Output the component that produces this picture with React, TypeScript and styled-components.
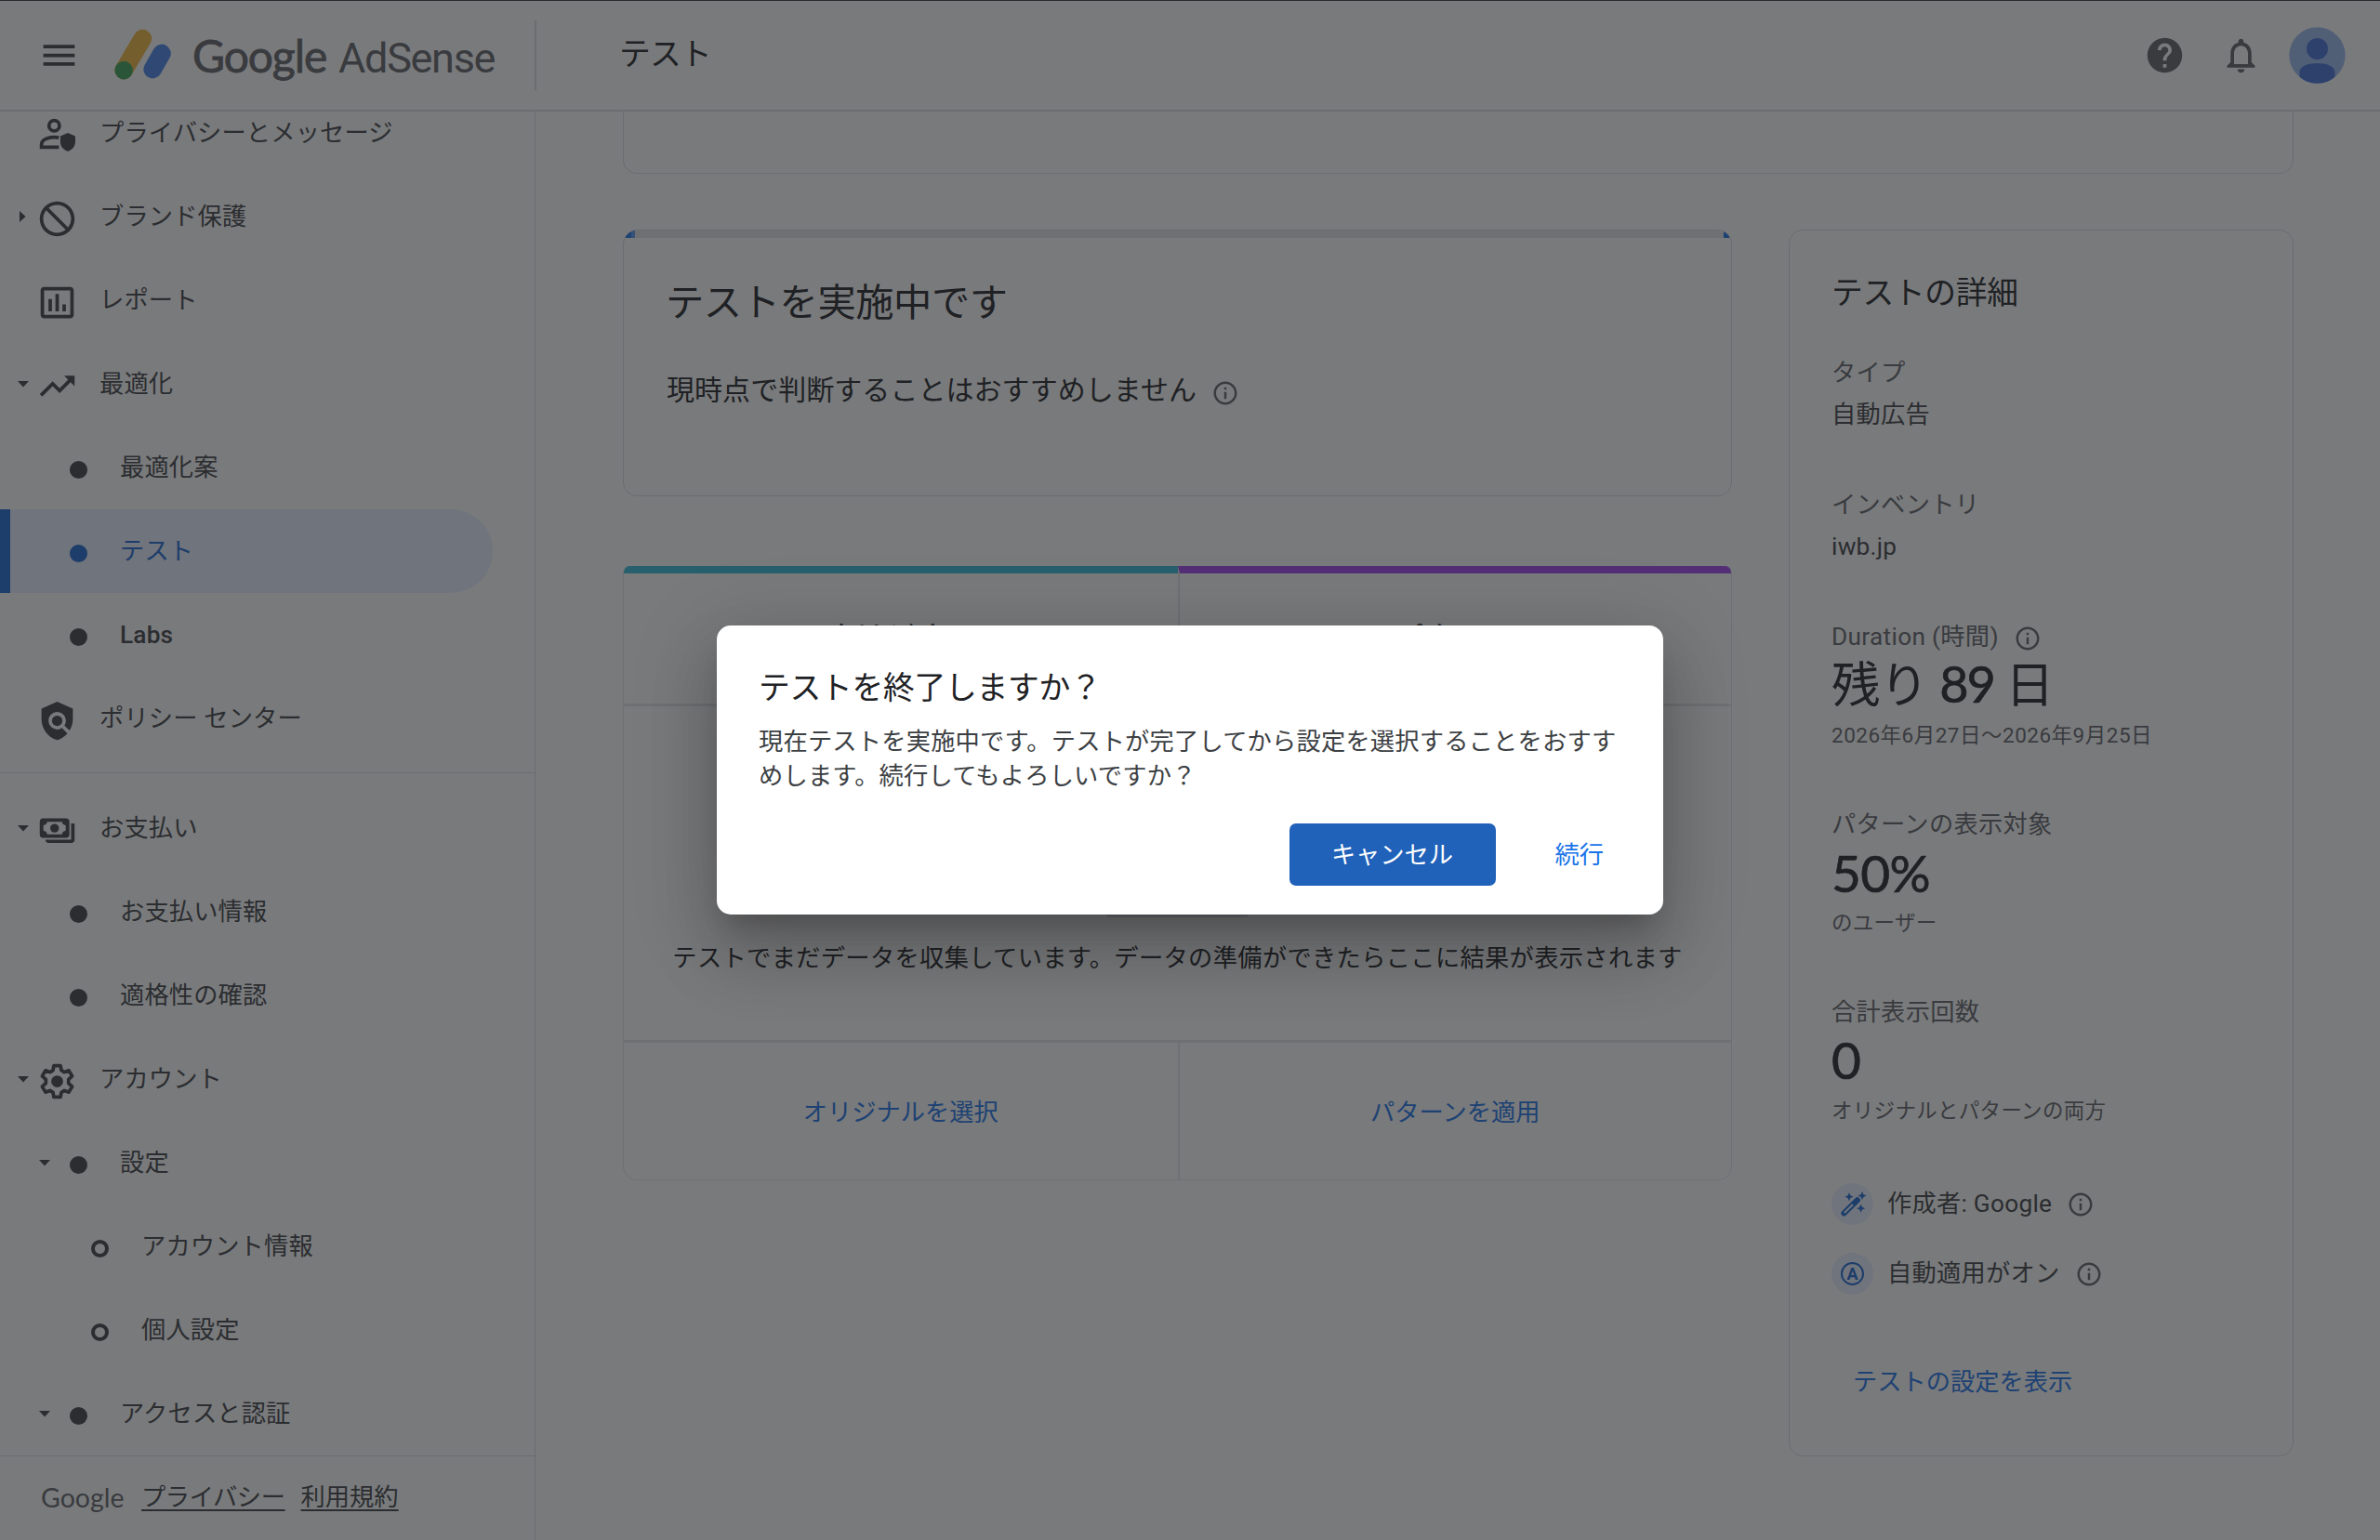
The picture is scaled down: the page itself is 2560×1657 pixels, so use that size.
import React from 'react';
import styled, { createGlobalStyle, css } from 'styled-components';
import {
  MdBlock,
  MdHelp,
  MdInsertChartOutlined,
  MdMenu,
  MdOutlineInfo,
  MdOutlineNotifications,
  MdPolicy,
  MdTrendingUp,
} from 'react-icons/md';

const c = {
  ink: '#202124',
  text: '#3c4043',
  muted: '#5f6368',
  line: '#dadce0',
  track: '#e4e6e9',
  link: '#1a73e8',
  active: '#1967d2',
  tint: '#e8f0fe',
  teal: '#33bdd8',
  purple: '#a044ef',
};

const sans = `Roboto, "Noto Sans CJK JP", sans-serif`;
const brand = `Lato, "Noto Sans CJK JP", sans-serif`;

const GlobalStyle = createGlobalStyle`
  *, *::before, *::after { box-sizing: border-box; }
  html, body { margin: 0; padding: 0; background: #fff; }
  body { overflow: hidden; font-family: ${sans}; color: ${c.text}; }
  p, h1, h2, h3, ul { margin: 0; padding: 0; font-weight: 400; }
  button { font: inherit; border: 0; background: none; padding: 0; }
  svg { display: block; flex: none; }
`;

const Page = styled.div`
  position: relative;
  display: flex;
  flex-direction: column;
  width: 2560px;
  height: 1657px;
  overflow: hidden;
  background: #fff;
`;

/* ---------- header ---------- */

const Header = styled.header`
  display: flex;
  align-items: center;
  flex: none;
  height: 120px;
  border-top: 1px solid #37383b;
  border-bottom: 2px solid ${c.line};
`;

const BrandArea = styled.div`
  display: flex;
  align-items: center;
  width: 577px;
  height: 75px;
  padding-left: 41px;
  border-right: 2px solid ${c.line};
`;

const LogoMark = styled.svg`
  margin-left: 37px;
`;

const Wordmark = styled.div`
  display: flex;
  align-items: baseline;
  margin-left: 22px;
  padding-top: 4px;
  font-family: ${brand};
  line-height: 60px;
  color: ${c.muted};
`;

const WordGoogle = styled.span`
  width: 157px;
  font-size: 48px;
  letter-spacing: -1.1px;
  -webkit-text-stroke: 0.8px ${c.muted};
`;

const WordProduct = styled.span`
  font-family: ${sans};
  font-size: 45px;
  letter-spacing: -1.3px;
`;

const PageTitle = styled.h1`
  flex: 1;
  padding: 0 0 2px 89px;
  font-size: 33.75px;
  line-height: 48px;
  letter-spacing: -0.8px;
  color: ${c.ink};
`;

const HeaderActions = styled.div`
  display: flex;
  align-items: center;
  gap: 37px;
  padding-right: 37px;
  color: ${c.muted};
`;

const IconButton = styled.button`
  color: inherit;
`;

const AvatarButton = styled(IconButton)`
  margin-left: -8px;
`;

/* ---------- sidebar ---------- */

const Body = styled.div`
  display: flex;
  flex: 1;
  min-height: 0;
`;

const Sidebar = styled.nav`
  display: flex;
  flex-direction: column;
  flex: none;
  width: 576px;
  border-right: 1px solid ${c.line};
`;

const NavScroll = styled.div`
  flex: 1;
  min-height: 0;
  overflow: hidden;
`;

const NavList = styled.ul`
  margin-top: -22px;
  list-style: none;
`;

const NavRow = styled.li<{ $level: number; $active?: boolean }>`
  display: flex;
  align-items: center;
  width: 530px;
  height: 90px;
  padding-left: ${(p) => 17 + p.$level * 23}px;
  font-size: 26.25px;
  line-height: 40px;
  letter-spacing: 0.15px;
  white-space: nowrap;
  ${(p) =>
    p.$active &&
    css`
      padding-left: ${6 + p.$level * 23}px;
      border-left: 11px solid ${c.active};
      border-radius: 0 45px 45px 0;
      background: ${c.tint};
      color: ${c.active};
    `}
`;

const CaretSlot = styled.span`
  display: flex;
  justify-content: center;
  width: 15px;
`;

const NavIcon = styled.span`
  display: flex;
  justify-content: center;
  width: 45px;
  margin: 5px 22px 0 7px;
`;

const BlockIcon = styled(MdBlock)`
  transform: scaleX(-1);
`;

const Dot = styled.span<{ $ring?: boolean }>`
  width: 19px;
  height: 19px;
  border-radius: 50%;
  border: 4px solid currentColor;
  background: ${(p) => (p.$ring ? 'transparent' : 'currentColor')};
`;

const NavLabel = styled.span<{ $latin?: boolean; $top?: boolean }>`
  padding: 0 0 1px ${(p) => (p.$top ? 1 : 0)}px;
  font-weight: ${(p) => (p.$latin ? 500 : 400)};
`;

const NavDivider = styled.li`
  height: 1px;
  margin: 13px 0 14px;
  background: ${c.line};
`;

const SidebarFooter = styled.footer`
  display: flex;
  align-items: center;
  flex: none;
  height: 91px;
  padding: 0 0 2px 44px;
  border-top: 1px solid ${c.line};
  font-size: 26.25px;
  line-height: 40px;
`;

const FooterLogo = styled.span`
  width: 108px;
  font-family: ${brand};
  font-size: 28.5px;
  color: ${c.muted};
`;

const FooterLink = styled.a<{ $tight?: boolean }>`
  margin-right: 17px;
  letter-spacing: ${(p) => (p.$tight ? -0.4 : 0)}px;
  text-decoration: underline;
  text-decoration-thickness: 2px;
  text-underline-offset: 4px;
`;

/* ---------- content ---------- */

const Main = styled.main`
  flex: 1;
  padding: 0 93px 0 94px;
`;

const TopCard = styled.div`
  height: 67px;
  border: 1px solid ${c.line};
  border-top: 0;
  border-radius: 0 0 15px 15px;
`;

const Columns = styled.div`
  display: flex;
  align-items: flex-start;
  gap: 61px;
  margin-top: 60px;
`;

const LeftColumn = styled.div`
  display: flex;
  flex-direction: column;
  gap: 75px;
  width: 1193px;
`;

const StatusCard = styled.section`
  height: 287px;
  overflow: hidden;
  border: 1px solid ${c.line};
  border-radius: 15px;
`;

const Progress = styled.div`
  display: flex;
  justify-content: space-between;
  height: 8px;
  background: ${c.track};
`;

const ProgressEnd = styled.span<{ $w: number; $soft: number }>`
  width: ${(p) => p.$w}px;
  border-right: ${(p) => p.$soft}px solid #5b9cf5;
  background: ${c.link};
`;

const StatusTitle = styled.h2`
  padding: 43px 45px 0;
  font-size: 41.25px;
  line-height: 54px;
  letter-spacing: -0.4px;
  color: ${c.ink};
`;

const StatusLine = styled.p`
  display: flex;
  align-items: center;
  gap: 16px;
  padding: 47px 45px 0 46px;
  font-size: 30px;
  line-height: 40px;
  letter-spacing: 0.05px;
  color: ${c.ink};
`;

const InfoGlyph = styled(MdOutlineInfo)<{ $drop?: number }>`
  margin-top: ${(p) => p.$drop ?? 0}px;
  color: ${c.muted};
`;

const CompareCard = styled.section`
  display: flex;
  flex-direction: column;
  height: 661px;
  overflow: hidden;
  border: 1px solid ${c.track};
  border-top: 0;
  border-radius: 7px 7px 15px 15px;
`;

const SplitRow = styled.div<{ $h: number; $line?: boolean }>`
  display: grid;
  grid-template-columns: 1fr 1fr;
  height: ${(p) => p.$h}px;
  ${(p) => p.$line && `border-bottom: 3px solid ${c.track};`}
`;

const Variant = styled.div<{ $color: string }>`
  padding-top: 49px;
  border-top: 8px solid ${(p) => p.$color};
  font-size: 33.75px;
  line-height: 42px;
  text-align: center;
  color: ${c.ink};
  & + & {
    padding-top: 50px;
    border-left: 2px solid ${c.track};
  }
`;

const Pending = styled.div`
  display: flex;
  flex-direction: column;
  align-items: center;
  height: 362px;
  padding-top: 50px;
  border-bottom: 3px solid ${c.track};
  font-size: 26.25px;
  line-height: 40px;
  letter-spacing: 0.33px;
  color: ${c.ink};
`;

const Placeholder = styled.div`
  width: 153px;
  height: 177px;
  margin-bottom: 24px;
  border-radius: 4px;
  background: #d8dde3;
`;

const Choice = styled.div`
  display: flex;
  align-items: center;
  justify-content: center;
  padding-top: 3px;
  font-size: 26.25px;
  line-height: 40px;
  color: ${c.link};
  & + & {
    border-left: 2px solid ${c.track};
  }
`;

/* ---------- details ---------- */

const Details = styled.aside`
  width: 543px;
  height: 1320px;
  padding: 45px 45px 0;
  border: 1px solid ${c.line};
  border-radius: 15px;
`;

const DetailsTitle = styled.h2`
  margin-bottom: 42px;
  font-size: 33.75px;
  line-height: 46px;
  letter-spacing: -0.3px;
  color: ${c.ink};
`;

const Field = styled.div<{ $gap: number }>`
  margin-bottom: ${(p) => p.$gap}px;
`;

const Label = styled.div`
  display: flex;
  align-items: center;
  gap: 16px;
  font-size: 26.25px;
  line-height: 40px;
  letter-spacing: 0.3px;
  color: ${c.muted};
`;

const Value = styled.div`
  font-size: 26.25px;
  line-height: 50px;
  letter-spacing: 0.25px;
  color: ${c.text};
`;

const BigValue = styled.div<{ $lift: number }>`
  height: 64px;
  padding-top: ${(p) => 4 - p.$lift}px;
  font-family: ${brand};
  font-size: 52.5px;
  line-height: 56px;
  letter-spacing: -0.4px;
  word-spacing: -1px;
  color: ${c.ink};
`;

const Figure = styled.span<{ $tight?: boolean }>`
  font-size: ${(p) => (p.$tight ? 54 : 55)}px;
  letter-spacing: ${(p) => (p.$tight ? -2 : -0.7)}px;
  -webkit-text-stroke: 0.7px ${c.ink};
`;

const Note = styled.div<{ $wide?: boolean }>`
  font-size: 22.5px;
  line-height: 44px;
  letter-spacing: ${(p) => (p.$wide ? 0.5 : 0.3)}px;
  color: ${c.muted};
`;

const ChipRow = styled.div`
  display: flex;
  align-items: center;
  height: 45px;
  margin-bottom: 30px;
  font-size: 26.25px;
  line-height: 40px;
  letter-spacing: 0.25px;
  color: ${c.text};
`;

const Chip = styled.span`
  display: flex;
  align-items: center;
  justify-content: center;
  width: 45px;
  height: 45px;
  margin-right: 15px;
  border-radius: 50%;
  background: ${c.tint};
  color: ${c.active};
`;

const ChipLabel = styled.span`
  margin: 0 16px 1px 0;
`;

const LetterRing = styled.span`
  width: 25px;
  height: 25px;
  border: 2.5px solid currentColor;
  border-radius: 50%;
  font-size: 18px;
  font-weight: 700;
  letter-spacing: 0;
  line-height: 21px;
  text-align: center;
`;

const SettingsLink = styled.a`
  display: block;
  margin-top: 74px;
  padding-left: 23px;
  font-size: 26.25px;
  line-height: 40px;
  color: ${c.link};
`;

/* ---------- dialog ---------- */

const Scrim = styled.div`
  position: absolute;
  inset: 0;
  display: flex;
  align-items: center;
  justify-content: center;
  background: rgba(32, 33, 36, 0.6);
`;

const Dialog = styled.div`
  display: flex;
  flex-direction: column;
  width: 1018px;
  height: 311px;
  padding: 44px 45px 31px;
  border-radius: 15px;
  background: #fff;
  box-shadow:
    0 21px 28px -13px rgba(0, 0, 0, 0.2),
    0 45px 71px 6px rgba(0, 0, 0, 0.14),
    0 17px 86px 15px rgba(0, 0, 0, 0.12);
`;

const DialogTitle = styled.h3`
  font-size: 33.75px;
  line-height: 48px;
  letter-spacing: -0.25px;
  color: ${c.ink};
`;

const DialogText = styled.p`
  margin-top: 15px;
  font-size: 26.25px;
  line-height: 37px;
  letter-spacing: 0.2px;
`;

const DialogActions = styled.div`
  display: flex;
  justify-content: flex-end;
  gap: 50px;
  margin-top: auto;
  padding-right: 18px;
  font-size: 26.25px;
  line-height: 66px;
`;

const Primary = styled.button`
  width: 222px;
  height: 67px;
  border-radius: 7px;
  background: #2061b9;
  color: #fff;
`;

const Secondary = styled.button`
  padding: 0 1px 0 14px;
  color: ${c.link};
`;

/* ---------- drawings ---------- */

const Caret = ({ open }: { open?: boolean }) =>
  open ? (
    <svg width="12" height="7" viewBox="0 0 12 7">
      <path d="M0 0h12L6 6.6z" fill="currentColor" />
    </svg>
  ) : (
    <svg width="7" height="12" viewBox="0 0 7 12">
      <path d="M0 0v12l6.6-6z" fill="currentColor" />
    </svg>
  );

const AdSenseMark = () => (
  <LogoMark width="62" height="66" viewBox="0 0 62 66" strokeLinecap="round" strokeWidth="19.6">
    <path d="M10.2 48.6 30.4 14.6" stroke="#f5b93a" />
    <path d="M41.2 47.6 51 30.4" stroke="#4a86ec" />
    <circle cx="10.2" cy="48.6" r="9.8" fill="#3ea457" />
  </LogoMark>
);

const PersonShield = () => (
  <svg width="45" height="45" viewBox="0 0 24 24" fill="none">
    <circle cx="10.3" cy="6.5" r="3" stroke="currentColor" strokeWidth="2" />
    <path
      d="M13 18.9H3v-1.7c0-2.6 3.6-4.1 7.3-4.1.9 0 1.8.1 2.6.3"
      stroke="currentColor"
      strokeWidth="2"
    />
    <path d="M18.1 10.6l4.3 1.9v3.2c0 2.7-1.8 4.8-4.3 5.5-2.5-.7-4.3-2.8-4.3-5.5v-3.2z" fill="currentColor" />
  </svg>
);

const Payments = () => (
  <svg width="45" height="45" viewBox="0 0 24 24" fill="currentColor">
    <path
      fillRule="evenodd"
      d="M4 5h13a2 2 0 0 1 2 2v7.3a2 2 0 0 1-2 2H4a2 2 0 0 1-2-2V7a2 2 0 0 1 2-2zm2.2 2A2 2 0 0 1 4.1 9v3.3a2 2 0 0 1 2.1 2h8.6a2 2 0 0 1 2.1-2V9a2 2 0 0 1-2.1-2z"
    />
    <circle cx="10.5" cy="10.7" r="2.5" />
    <path d="M22 8v9.2a2 2 0 0 1-2 2H7a2 2 0 0 1-1.7-1.9H20V8z" />
  </svg>
);

const Gear = () => (
  <svg width="45" height="45" viewBox="0 0 24 24" fill="none">
    <path
      d="M10.1 3h3.8l.5 2.7 1.7 1 2.6-.9 1.9 3.2-2.1 1.9v2.2l2.1 1.9-1.9 3.2-2.6-.9-1.7 1-.5 2.7h-3.8l-.5-2.7-1.7-1-2.6.9L3.4 15l2.1-1.9v-2.2L3.4 9l1.9-3.2 2.6.9 1.7-1z"
      stroke="currentColor"
      strokeWidth="2"
      strokeLinejoin="round"
    />
    <circle cx="12" cy="12" r="3.4" fill="currentColor" />
  </svg>
);

const Wand = () => (
  <svg width="30" height="30" viewBox="0 0 24 24" fill="currentColor">
    <path d="M4.4 19.5 15.8 8.3" stroke="currentColor" strokeWidth="5" strokeLinecap="round" />
    <path d="M4.7 19.2 12 12" stroke={c.tint} strokeWidth="1.6" />
    <path d="M8.8 1.7l1.1 2.5 2.5 1.1-2.5 1.1-1.1 2.5-1.1-2.5-2.5-1.1 2.5-1.1z" />
    <path d="M20 .8l1.1 2.5 2.5 1.1-2.5 1.1L20 8l-1.1-2.5-2.5-1.1 2.5-1.1z" />
    <path d="M18.9 11.7l1.1 2.5 2.5 1.1-2.5 1.1-1.1 2.5-1.1-2.5-2.5-1.1 2.5-1.1z" />
  </svg>
);

const Avatar = () => (
  <svg width="61" height="61" viewBox="0 0 61 61">
    <defs>
      <clipPath id="avatar">
        <circle cx="30.5" cy="30.5" r="30.2" />
      </clipPath>
    </defs>
    <g clipPath="url(#avatar)">
      <rect width="61" height="61" fill="#9bbcf0" />
      <circle cx="30.5" cy="23.5" r="11.5" fill="#4472d8" />
      <path d="M11.5 61V49c0-7 9-10 19-10s19 3 19 10v12z" fill="#4472d8" />
    </g>
  </svg>
);

/* ---------- data ---------- */

type NavItem = {
  label: string;
  level: number;
  caret?: 'open' | 'closed';
  icon?: React.ReactNode;
  active?: boolean;
  latin?: boolean;
};

const upper: NavItem[] = [
  { label: 'プライバシーとメッセージ', level: 0, icon: <PersonShield /> },
  { label: 'ブランド保護', level: 0, caret: 'closed', icon: <BlockIcon size={45} /> },
  { label: 'レポート', level: 0, icon: <MdInsertChartOutlined size={45} /> },
  { label: '最適化', level: 0, caret: 'open', icon: <MdTrendingUp size={45} /> },
  { label: '最適化案', level: 1 },
  { label: 'テスト', level: 1, active: true },
  { label: 'Labs', level: 1, latin: true },
  { label: 'ポリシー センター', level: 0, icon: <MdPolicy size={45} /> },
];

const lower: NavItem[] = [
  { label: 'お支払い', level: 0, caret: 'open', icon: <Payments /> },
  { label: 'お支払い情報', level: 1 },
  { label: '適格性の確認', level: 1 },
  { label: 'アカウント', level: 0, caret: 'open', icon: <Gear /> },
  { label: '設定', level: 1, caret: 'open' },
  { label: 'アカウント情報', level: 2 },
  { label: '個人設定', level: 2 },
  { label: 'アクセスと認証', level: 1, caret: 'open' },
];

const NavEntry = ({ item }: { item: NavItem }) => (
  <NavRow $level={item.level} $active={item.active}>
    <CaretSlot>{item.caret && <Caret open={item.caret === 'open'} />}</CaretSlot>
    <NavIcon>{item.icon ?? <Dot $ring={item.level === 2} />}</NavIcon>
    <NavLabel $latin={item.latin} $top={item.level === 0}>
      {item.label}
    </NavLabel>
  </NavRow>
);

export default function App() {
  return (
    <Page lang="ja">
      <GlobalStyle />
      <Header>
        <BrandArea>
          <MdMenu size={45} color={c.text} />
          <AdSenseMark />
          <Wordmark>
            <WordGoogle>Google</WordGoogle>
            <WordProduct>AdSense</WordProduct>
          </Wordmark>
        </BrandArea>
        <PageTitle>テスト</PageTitle>
        <HeaderActions>
          <IconButton>
            <MdHelp size={45} />
          </IconButton>
          <IconButton>
            <MdOutlineNotifications size={45} />
          </IconButton>
          <AvatarButton>
            <Avatar />
          </AvatarButton>
        </HeaderActions>
      </Header>

      <Body>
        <Sidebar>
          <NavScroll>
            <NavList>
              {upper.map((item) => (
                <NavEntry key={item.label} item={item} />
              ))}
              <NavDivider />
              {lower.map((item) => (
                <NavEntry key={item.label} item={item} />
              ))}
            </NavList>
          </NavScroll>
          <SidebarFooter>
            <FooterLogo>Google</FooterLogo>
            <FooterLink $tight>プライバシー</FooterLink>
            <FooterLink>利用規約</FooterLink>
          </SidebarFooter>
        </Sidebar>

        <Main>
          <TopCard />
          <Columns>
            <LeftColumn>
              <StatusCard>
                <Progress>
                  <ProgressEnd $w={12} $soft={4} />
                  <ProgressEnd $w={8} $soft={0} />
                </Progress>
                <StatusTitle>テストを実施中です</StatusTitle>
                <StatusLine>
                  現時点で判断することはおすすめしません
                  <InfoGlyph size={30} $drop={6} />
                </StatusLine>
              </StatusCard>
              <CompareCard>
                <SplitRow $h={151} $line>
                  <Variant $color={c.teal}>オリジナル</Variant>
                  <Variant $color={c.purple}>パターン</Variant>
                </SplitRow>
                <Pending>
                  <Placeholder />
                  <p>テストでまだデータを収集しています。データの準備ができたらここに結果が表示されます</p>
                </Pending>
                <SplitRow $h={147}>
                  <Choice>オリジナルを選択</Choice>
                  <Choice>パターンを適用</Choice>
                </SplitRow>
              </CompareCard>
            </LeftColumn>

            <Details>
              <DetailsTitle>テストの詳細</DetailsTitle>
              <Field $gap={52}>
                <Label>タイプ</Label>
                <Value>自動広告</Value>
              </Field>
              <Field $gap={52}>
                <Label>インベントリ</Label>
                <Value>iwb.jp</Value>
              </Field>
              <Field $gap={54}>
                <Label>
                  Duration (時間)
                  <InfoGlyph size={30} $drop={4} />
                </Label>
                <BigValue $lift={1}>
                  残り <Figure $tight>89</Figure> 日
                </BigValue>
                <Note $wide>2026年6月27日〜2026年9月25日</Note>
              </Field>
              <Field $gap={54}>
                <Label>パターンの表示対象</Label>
                <BigValue $lift={0}>
                  <Figure>50%</Figure>
                </BigValue>
                <Note>のユーザー</Note>
              </Field>
              <Field $gap={56}>
                <Label>合計表示回数</Label>
                <BigValue $lift={1}>
                  <Figure>0</Figure>
                </BigValue>
                <Note>オリジナルとパターンの両方</Note>
              </Field>
              <ChipRow>
                <Chip>
                  <Wand />
                </Chip>
                <ChipLabel>作成者: Google</ChipLabel>
                <InfoGlyph size={30} />
              </ChipRow>
              <ChipRow>
                <Chip>
                  <LetterRing>A</LetterRing>
                </Chip>
                <ChipLabel>自動適用がオン</ChipLabel>
                <InfoGlyph size={30} />
              </ChipRow>
              <SettingsLink>テストの設定を表示</SettingsLink>
            </Details>
          </Columns>
        </Main>
      </Body>

      <Scrim>
        <Dialog role="dialog">
          <DialogTitle>テストを終了しますか？</DialogTitle>
          <DialogText>
            現在テストを実施中です。テストが完了してから設定を選択することをおすすめします。続行してもよろしいですか？
          </DialogText>
          <DialogActions>
            <Primary>キャンセル</Primary>
            <Secondary>続行</Secondary>
          </DialogActions>
        </Dialog>
      </Scrim>
    </Page>
  );
}
